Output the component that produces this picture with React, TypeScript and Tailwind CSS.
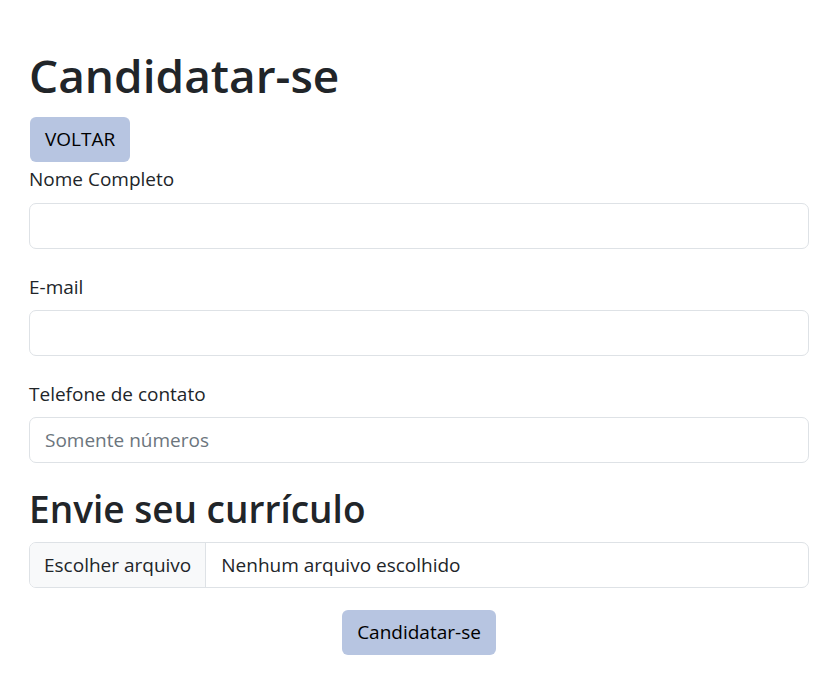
import React from 'react';

export default function App() {
  return (
    <div className="min-h-screen bg-white pl-[29px] pr-[24px] pt-[47px] font-['Open_Sans',sans-serif] text-[#212529]">
      <h1 className="text-[46px] font-semibold leading-[56px] mb-[14px]">Candidatar-se</h1>
      <button className="ml-px h-[45px] px-[15px] bg-[#b7c5e1] rounded-[6px] text-[19px] text-black">VOLTAR</button>

      <form className="flex flex-col">
        {/* Nome */}
        <label className="block text-[19px] leading-[28px] mt-[3px]">Nome Completo</label>
        <input type="text" className="mt-[10px] h-[46px] w-full rounded-[7px] border border-[#dee2e6] px-[15px] text-[19px] outline-none" />

        {/* E-mail */}
        <label className="block text-[19px] leading-[28px] mt-[24px]">E-mail</label>
        <input type="email" className="mt-[9px] h-[46px] w-full rounded-[7px] border border-[#dee2e6] px-[15px] text-[19px] outline-none" />

        {/* Telefone */}
        <label className="block text-[19px] leading-[28px] mt-[24px]">Telefone de contato</label>
        <input
          type="text"
          placeholder="Somente números"
          className="mt-[9px] h-[46px] w-full rounded-[7px] border border-[#dee2e6] px-[15px] text-[19px] outline-none placeholder:text-[#6c757d]"
        />

        <h2 className="text-[37px] font-semibold leading-[46px] mt-[23px]">Envie seu currículo</h2>
        <div className="mt-[10px] flex h-[46px] w-full overflow-hidden rounded-[7px] border border-[#dee2e6] text-[19px]">
          <span className="flex items-center bg-[#f8f9fa] border-r border-[#dee2e6] px-[14px]">Escolher arquivo</span>
          <span className="flex items-center px-[15px]">Nenhum arquivo escolhido</span>
        </div>

        <div className="mt-[22px] flex justify-center">
          <button type="button" className="h-[45px] px-[15px] bg-[#b7c5e1] rounded-[6px] text-[19px] text-black">Candidatar-se</button>
        </div>
      </form>
    </div>
  );
}
